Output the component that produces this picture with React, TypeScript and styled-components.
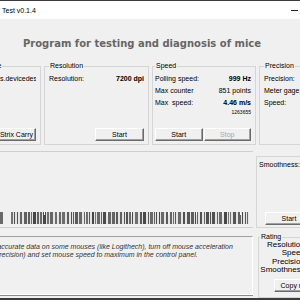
import React from "react";
import styled, { createGlobalStyle } from "styled-components";

const Global = createGlobalStyle`
  html, body { margin: 0; padding: 0; background: #f0f0f0; }
  body { font-family: "Liberation Sans", Arial, sans-serif; }
  * { box-sizing: border-box; }
`;

const Window = styled.div`
  width: 300px;
  height: 300px;
  overflow: hidden;
  background: #f0f0f0;
  display: flex;
  flex-direction: column;
  border-bottom: 2px solid #3a3a3a;
  font-size: 7px;
  color: #000;
`;

const TitleBar = styled.div`
  height: 19px;
  flex: none;
  background: #fff;
  border-top: 1px solid #3c3c3c;
  display: flex;
  align-items: center;
  justify-content: space-between;
  padding: 0 2px 0 2px;
  font-size: 7px;
`;

const Minimize = styled.span`
  width: 7px;
  height: 1px;
  background: #222;
`;

const Heading = styled.div`
  height: 43px;
  flex: none;
  display: flex;
  align-items: center;
  justify-content: center;
  padding: 5px 16px 0 0;
  font-family: "DejaVu Sans", sans-serif;
  font-weight: bold;
  font-size: 10px;
  color: #666;
  white-space: nowrap;
`;

const GroupsRow = styled.div`
  display: flex;
  gap: 3px;
  margin-left: -25px;
  height: 83px;
  flex: none;
`;

const Group = styled.fieldset<{ $w: number; $pl?: number }>`
  margin: 0;
  padding: 0 4px 3px ${(p) => p.$pl ?? 4}px;
  border: 1px solid #d5d5d5;
  width: ${(p) => p.$w}px;
  min-width: 0;
  flex: none;
  display: flex;
  flex-direction: column;
  overflow: hidden;
`;

const Legend = styled.legend`
  font-size: 7px;
  line-height: 8px;
  padding: 0 1px;
`;

const Rows = styled.div`
  padding-top: 3px;
  display: flex;
  flex-direction: column;
`;

const Field = styled.div`
  display: flex;
  justify-content: space-between;
  height: 12px;
  line-height: 12px;
  white-space: nowrap;
`;

const Value = styled.span<{ $bold?: boolean }>`
  font-weight: ${(p) => (p.$bold ? "bold" : "normal")};
`;

const SubValue = styled.div`
  text-align: right;
  font-size: 5px;
  line-height: 6px;
`;

const ClipLabel = styled.div`
  height: 12px;
  line-height: 12px;
  white-space: nowrap;
  overflow: hidden;
`;

const Button = styled.button<{ $w?: number; $disabled?: boolean }>`
  height: 13px;
  padding: 0;
  margin: 0;
  font-family: "Liberation Sans", Arial, sans-serif;
  font-size: 7px;
  line-height: 11px;
  white-space: nowrap;
  overflow: hidden;
  background: #f0f0f0;
  color: ${(p) => (p.$disabled ? "#a8a8a8" : "#000")};
  border: 1px solid;
  border-color: #fff #6a6a6a #6a6a6a #fff;
  box-shadow: inset -1px -1px 0 #a0a0a0;
  width: ${(p) => (p.$w ? `${p.$w}px` : "auto")};
  flex: ${(p) => (p.$w ? "none" : "1")};
`;

const Bottom = styled.div<{ $end?: boolean }>`
  margin-top: auto;
  display: flex;
  gap: 1px;
  justify-content: ${(p) => (p.$end ? "flex-end" : "stretch")};
`;

const MiddleRow = styled.div`
  display: flex;
  margin-top: 6px;
  margin-left: -20px;
  height: 77px;
  flex: none;
  gap: 3px;
`;

const ChartPanel = styled.div`
  width: 273px;
  flex: none;
  border-top: 1px solid #cfcfcf;
  border-bottom: 1px solid #cfcfcf;
  display: flex;
  flex-direction: column;
  justify-content: flex-end;
  padding: 0 0 3px 20px;
`;

const Strip = styled.svg`
  display: block;
`;

const SideBox = styled.div`
  width: 60px;
  flex: none;
  margin-top: 5px;
  border: 1px solid #d5d5d5;
  border-right: none;
  display: flex;
  flex-direction: column;
  padding: 2px 0 2px 2px;
`;

const SideAction = styled.div`
  margin: auto 0 0 6px;
  display: flex;
`;

const BottomRow = styled.div`
  display: flex;
  margin-top: 5px;
  margin-left: -20px;
  flex: 1;
  gap: 5px;
`;

const InfoPanel = styled.div`
  width: 273px;
  flex: none;
  margin-top: 3px;
  height: 59px;
  border: 1px solid;
  border-color: #a0a0a0 #fff #fff #a0a0a0;
  box-shadow: 0 1px 0 #8a8a8a;
  padding: 6px 0 0 4px;
  font-style: italic;
  font-size: 7px;
  color: #333;
  overflow: hidden;
`;

const InfoLine = styled.div<{ $indent?: number }>`
  line-height: 8px;
  white-space: nowrap;
  padding-left: ${(p) => p.$indent ?? 0}px;
`;

const RatingGroup = styled(Group)`
  padding: 0 0 0 1px;
`;

const RatingLabels = styled.div`
  width: 47px;
  text-align: right;
  font-size: 8px;
  line-height: 8.4px;
  white-space: nowrap;
`;

const CopyWrap = styled.div`
  margin: 4px 0 0 14px;
  display: flex;
`;

function Bars() {
  const items: { x: number; w: number; c: string }[] = [];
  let seed = 11;
  const rnd = () => {
    seed = (seed * 9301 + 49297) % 233280;
    return seed / 233280;
  };
  let x = 11;
  while (x < 249) {
    const w = 1 + Math.floor(rnd() * 3);
    const s = 70 + Math.floor(rnd() * 50);
    items.push({ x, w: Math.min(w, 249 - x), c: `rgb(${s},${s},${s})` });
    x += w + (rnd() > 0.7 ? 2 : 1);
  }
  const notches = [44, 57, 85, 107, 131, 168, 196, 222, 240];
  return (
    <Strip width={253} height={12} viewBox="0 0 253 12">
      <rect x={0} y={0} width={3} height={12} fill="#6a6a6a" />
      <rect x={11} y={0} width={238} height={12} fill="#e4e4e4" />
      {items.map((b, i) => (
        <rect key={i} x={b.x} y={0} width={b.w} height={12} fill={b.c} />
      ))}
      {notches.map((n) => (
        <rect key={n} x={n} y={0} width={1} height={3} fill="#fafafa" />
      ))}
    </Strip>
  );
}

export default function App() {
  return (
    <>
      <Global />
      <Window>
        <TitleBar>
          <span>Test v0.1.4</span>
          <Minimize />
        </TitleBar>
        <Heading>Program for testing and diagnosis of mice</Heading>
        <GroupsRow>
          <Group $w={66} $pl={3}>
            <Legend>Device</Legend>
            <Rows>
              <ClipLabel>mouses.devicedescription</ClipLabel>
            </Rows>
            <Bottom>
              <Button>ROG Strix Carry</Button>
            </Bottom>
          </Group>
          <Group $w={105}>
            <Legend>Resolution</Legend>
            <Rows>
              <Field>
                <span>Resolution:</span>
                <Value $bold>7200 dpi</Value>
              </Field>
            </Rows>
            <Bottom $end>
              <Button $w={49}>Start</Button>
            </Bottom>
          </Group>
          <Group $w={104} $pl={2}>
            <Legend>Speed</Legend>
            <Rows>
              <Field>
                <span>Polling speed:</span>
                <Value $bold>999 Hz</Value>
              </Field>
              <Field>
                <span>Max counter</span>
                <Value>851 points</Value>
              </Field>
              <Field>
                <span>Max&nbsp; speed:</span>
                <Value $bold>4.46 m/s</Value>
              </Field>
              <SubValue>1263655</SubValue>
            </Rows>
            <Bottom>
              <Button>Start</Button>
              <Button $disabled>Stop</Button>
            </Bottom>
          </Group>
          <Group $w={80}>
            <Legend>Precision</Legend>
            <Rows>
              <Field>
                <span>Precision:</span>
              </Field>
              <Field>
                <span>Meter gage:</span>
              </Field>
              <Field>
                <span>Speed:</span>
              </Field>
            </Rows>
          </Group>
        </GroupsRow>
        <MiddleRow>
          <ChartPanel>
            <Bars />
          </ChartPanel>
          <SideBox>
            <Field>
              <span>Smoothness:</span>
            </Field>
            <SideAction>
              <Button $w={48}>Start</Button>
            </SideAction>
          </SideBox>
        </MiddleRow>
        <BottomRow>
          <InfoPanel>
            <InfoLine>
              For accurate data on some mouses (like Logithech), turn off mouse acceleration
            </InfoLine>
            <InfoLine $indent={8}>
              (precision) and set mouse speed to maximum in the control panel.
            </InfoLine>
          </InfoPanel>
          <RatingGroup $w={60}>
            <Legend>Rating</Legend>
            <RatingLabels>
              <div>Resolution:</div>
              <div>Speed:</div>
              <div>Precision:</div>
              <div>Smoothness:</div>
            </RatingLabels>
            <CopyWrap>
              <Button $w={52}>Copy results</Button>
            </CopyWrap>
          </RatingGroup>
        </BottomRow>
      </Window>
    </>
  );
}
